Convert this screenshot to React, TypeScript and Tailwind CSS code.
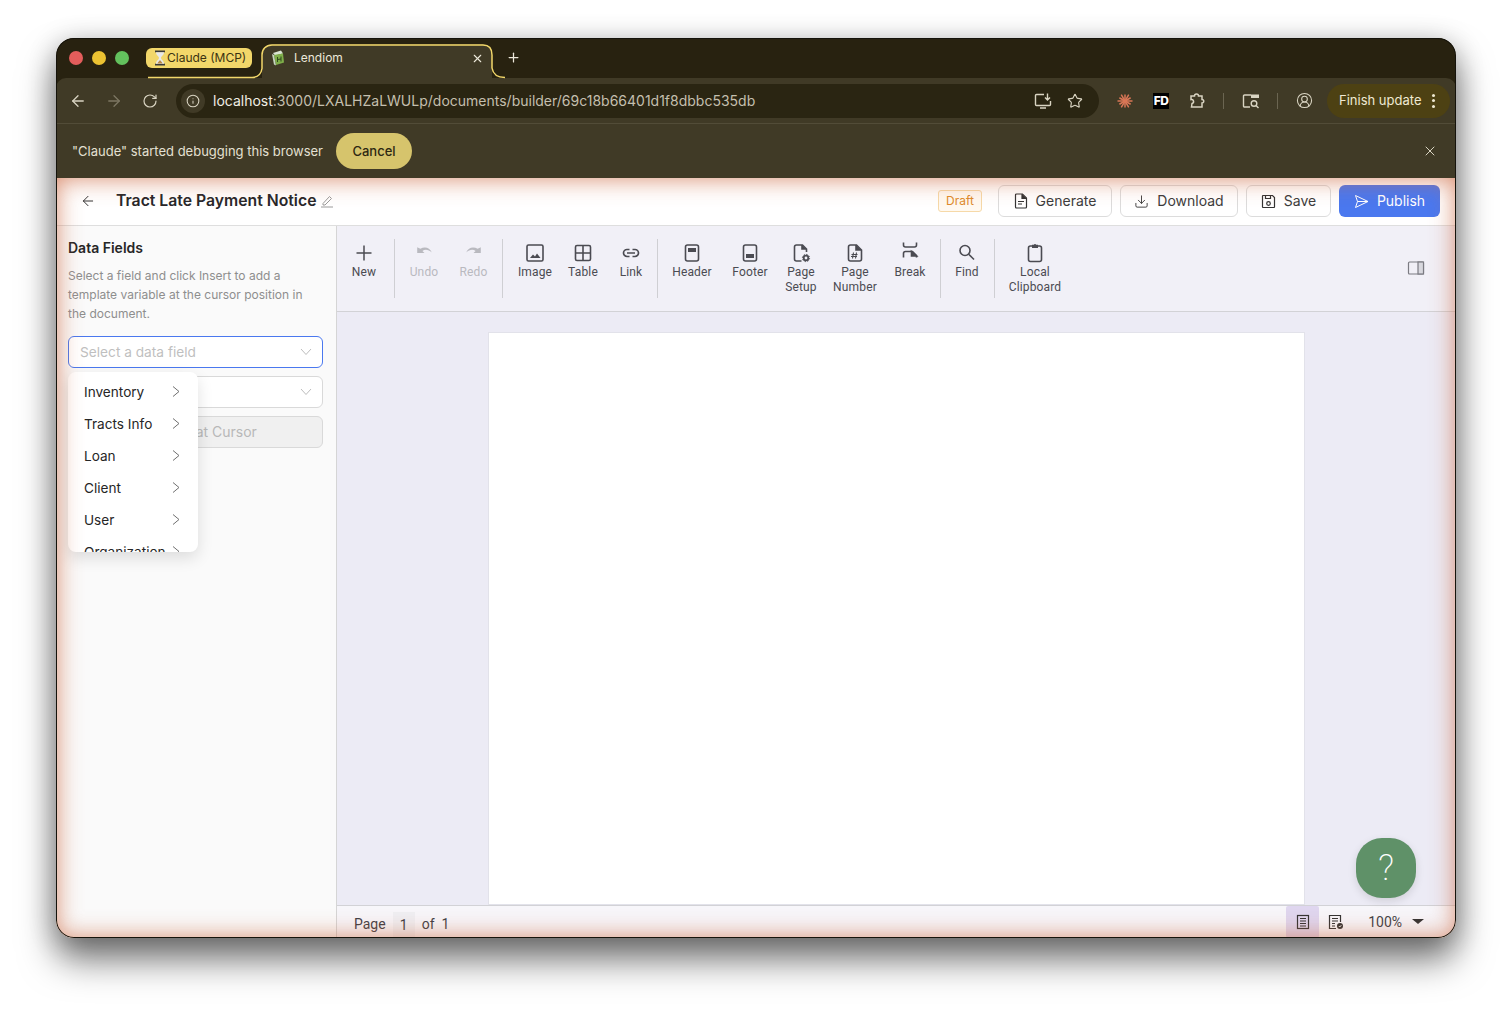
import {
  ArrowLeft,
  ArrowRight,
  CircleUserRound,
  Download,
  Info,
  Plus,
  RotateCw,
  Star,
  X,
} from 'lucide-react';
import type { ReactNode } from 'react';

const ico = { fill: 'none', stroke: 'currentColor', strokeWidth: 1.6 };

function Svg({ children, size = 22 }: { children: ReactNode; size?: number }) {
  return (
    <svg width={size} height={size} viewBox="0 0 24 24" {...ico}>
      {children}
    </svg>
  );
}

const toolIcons: Record<string, ReactNode> = {
  new: <Svg size={24}><path d="M12 4.500v15M4.500 12h15" strokeWidth="1.500" /></Svg>,
  undo: (
    <Svg size={25}>
      <path d="M8 8.500c4-2.500 9-1.500 11 3.500-3-3-6.500-3.500-9-1.500l2 2H5V7z" fill="currentColor" stroke="none" />
    </Svg>
  ),
  redo: (
    <Svg size={25}>
      <path d="M16 8.500c-4-2.500-9-1.500-11 3.500 3-3 6.500-3.500 9-1.500l-2 2h7V7z" fill="currentColor" stroke="none" />
    </Svg>
  ),
  image: (
    <Svg size={24}>
      <rect x="4" y="4" width="16" height="16" rx="1.500" />
      <path d="M7 17l3-3.500 2 2 2-3 3.500 4.500z" fill="currentColor" stroke="none" />
    </Svg>
  ),
  table: (
    <Svg size={24}>
      <rect x="4.500" y="4.500" width="15" height="15" rx="1.500" />
      <path d="M12 4.500v15M4.500 12h15" />
    </Svg>
  ),
  link: (
    <Svg size={24}>
      <path d="M10.500 8.500H8a3.500 3.500 0 0 0 0 7h2.500M13.500 8.500H16a3.500 3.500 0 0 1 0 7h-2.500M8 12h8" strokeWidth="1.700" />
    </Svg>
  ),
  header: (
    <Svg size={24}>
      <rect x="5.500" y="4" width="13" height="16" rx="2" />
      <rect x="8" y="7" width="8" height="4" fill="currentColor" stroke="none" />
    </Svg>
  ),
  footer: (
    <Svg size={24}>
      <rect x="5.500" y="4" width="13" height="16" rx="2" />
      <rect x="8" y="13" width="8" height="4" fill="currentColor" stroke="none" />
    </Svg>
  ),
  setup: (
    <Svg size={24}>
      <path d="M12.500 20H7.500a2 2 0 0 1-2-2V6a2 2 0 0 1 2-2h6l4 4v3" />
      <path d="M13 4v4h4" fill="currentColor" />
      <circle cx="17" cy="17" r="2.300" strokeWidth="1.800" />
      <circle cx="17" cy="17" r="3.600" strokeWidth="1" strokeDasharray="1.400 1.400" />
    </Svg>
  ),
  number: (
    <Svg size={24}>
      <path d="M7.500 4h6l5 5v9a2 2 0 0 1-2 2h-9a2 2 0 0 1-2-2V6a2 2 0 0 1 2-2z" />
      <path d="M13 4v5h5" fill="currentColor" />
      <path d="M10.500 11.500l-1 6M13.500 11.500l-1 6M8.500 13.500h6M8 15.500h6" strokeWidth="1.100" />
    </Svg>
  ),
  break: (
    <Svg size={24}>
      <path d="M5.500 1.500v2.500a2 2 0 0 0 2 2h9a2 2 0 0 0 2-2V1.500" />
      <path d="M5.500 16.500v-4a2 2 0 0 1 2-2h7l4 4v2" />
      <path d="M13.500 10.500v4.500h5z" fill="currentColor" />
    </Svg>
  ),
  find: (
    <Svg size={24}>
      <circle cx="10" cy="9.500" r="5" />
      <path d="M13.700 13.200L19 18.500" />
    </Svg>
  ),
  clipboard: (
    <Svg size={24}>
      <rect x="5.500" y="5" width="13" height="15.500" rx="2" />
      <path d="M9 3.800h1.800a1.300 1.300 0 0 1 2.400 0H15v3.200H9z" fill="currentColor" stroke="none" />
    </Svg>
  ),
};

const toolItems = [
  { icon: 'new', lines: ['New'], cls: 'w-[54px] ml-0', div: 'ml-[3px]' },
  { icon: 'undo', lines: ['Undo'], cls: 'w-[48px] ml-[5px]', off: true },
  { icon: 'redo', lines: ['Redo'], cls: 'w-[51px] ml-0', off: true, div: 'ml-[3px]' },
  { icon: 'image', lines: ['Image'], cls: 'w-[50px] ml-[7px]' },
  { icon: 'table', lines: ['Table'], cls: 'w-[46px] ml-0' },
  { icon: 'link', lines: ['Link'], cls: 'w-[46px] ml-[2px]', div: 'ml-[3px]' },
  { icon: 'header', lines: ['Header'], cls: 'w-[56px] ml-[6px]' },
  { icon: 'footer', lines: ['Footer'], cls: 'w-[56px] ml-[2px]' },
  { icon: 'setup', lines: ['Page', 'Setup'], cls: 'w-[46px] ml-0' },
  { icon: 'number', lines: ['Page', 'Number'], cls: 'w-[54px] ml-[4px]' },
  { icon: 'break', lines: ['Break'], cls: 'w-[48px] ml-[4px]', div: 'ml-[6px]' },
  { icon: 'find', lines: ['Find'], cls: 'w-[42px] ml-[5px]', div: 'ml-[6px]' },
  { icon: 'clipboard', lines: ['Local', 'Clipboard'], cls: 'w-[70px] ml-[5px]' },
];

const menuItems = ['Inventory', 'Tracts Info', 'Loan', 'Client', 'User', 'Organization'];

function Hourglass() {
  return (
    <svg width="12" height="16" viewBox="0 0 12 16">
      <rect x="1" y="0.500" width="10" height="1.800" fill="#3a3a3a" />
      <rect x="1" y="13.700" width="10" height="1.800" fill="#3a3a3a" />
      <path d="M2 2.300h8c0 3-3 4-3 5.700s3 2.700 3 5.700H2c0-3 3-4 3-5.700S2 5.300 2 2.300z" fill="#e8e8e8" />
      <path d="M3.500 13.500c.5-2 2-2.500 2.500-3.500.500 1 2 1.500 2.500 3.500z" fill="#b98a4a" />
    </svg>
  );
}

function Favicon() {
  return (
    <svg width="14" height="16" viewBox="0 0 14 16">
      <path d="M2 3l8-2.500 2 3-8 2z" fill="#d9e4d2" />
      <path d="M3 5l9-1.500 1 9-8 2.500z" fill="#7fae4a" />
      <path d="M1 4l2 1 2 10.500-2-1z" fill="#c7d6c0" />
      <path d="M6.500 7v5M10 6.500v5M6.500 9.500L10 9" stroke="#2f4a1c" strokeWidth="1" fill="none" />
    </svg>
  );
}

function ClaudeMark() {
  const rays = [0, 30, 60, 90, 120, 150, 180, 210, 240, 270, 300, 330];
  return (
    <svg width="16" height="16" viewBox="0 0 16 16">
      {rays.map((r, i) => (
        <line key={r} x1="8" y1="8" x2="8" y2={i % 2 ? 0.500 : 1.500} stroke="#d97757" strokeWidth="1.500" transform={`rotate(${r} 8 8)`} />
      ))}
    </svg>
  );
}

function SelectCaret() {
  return (
    <svg width="12" height="8" viewBox="0 0 12 8" fill="none" stroke="#bdbdbd" strokeWidth="1">
      <path d="M1 1l5 5.500L11 1" />
    </svg>
  );
}

function ActionButton({ icon, label, cls }: { icon: ReactNode; label: string; cls: string }) {
  return (
    <button className={`flex h-8 items-center justify-center gap-2 rounded-md border border-[#dcdcdc] bg-white text-sm text-[#3c3c3c] ${cls}`}>
      {icon}
      {label}
    </button>
  );
}

export default function App() {
  return (
    <div className="h-[1012px] w-[1512px] overflow-hidden bg-white pl-14 pt-[38px] font-['Inter',sans-serif]">
      <div className="relative flex h-[900px] w-[1400px] flex-col overflow-hidden rounded-[18px] bg-[#282210] shadow-[0_22px_36px_rgba(0,0,0,0.52),0_4px_28px_rgba(0,0,0,0.24)]">
        {/* Tab strip */}
        <div className="flex h-10 shrink-0 items-center pl-[13px]">
          <div className="flex items-center gap-[9px]">
            <span className="h-[14px] w-[14px] rounded-full bg-[#e35d5b]" />
            <span className="h-[14px] w-[14px] rounded-full bg-[#ecc232]" />
            <span className="h-[14px] w-[14px] rounded-full bg-[#63c15d]" />
          </div>
          <div className="ml-[17px] flex h-5 w-[106px] items-center rounded-md bg-[#f2d76a] pl-2 text-xs text-[#3b3212]">
            <Hourglass />
            <span className="ml-px">Claude (MCP)</span>
          </div>
          <div className="relative ml-[10px] mt-[6px] flex h-[34px] w-[230px] items-center rounded-t-[10px] bg-[#403a26] pb-[6px] pl-[9px] pr-2 text-xs text-[#ece8da]">
            <svg className="absolute left-[-116px] top-0" width="362" height="35" viewBox="0 0 362 35" fill="none" stroke="#f2d76a" strokeWidth="1.500">
              <path d="M2 33.500H106c5 0 9-3 10-9V11c0-6 4-10 10-10H337c6 0 9 4 9 10v13c1 6 5 9.500 13 9.500" />
            </svg>
            <Favicon />
            <span className="ml-[9px] flex-1">Lendiom</span>
            <X size={13} strokeWidth={2} />
            <Plus size={15} strokeWidth={2} className="absolute left-[244px] top-[6px]" />
          </div>
        </div>

        {/* Toolbar */}
        <div className="flex h-[46px] shrink-0 items-center rounded-t-[10px] border-b border-[#524c38] bg-[#403a26] text-[#d9d4c2]">
          <div className="flex w-[120px] items-center gap-[18px] pl-[13px]">
            <ArrowLeft size={18} strokeWidth={1.700} />
            <ArrowRight size={18} strokeWidth={1.700} className="text-[#7d7763]" />
            <RotateCw size={16} strokeWidth={1.800} className="ml-px" />
          </div>
          <div className="flex h-[34px] w-[923px] items-center rounded-full bg-[#2a2512] pl-[5px] pr-4">
            <span className="flex h-6 w-6 items-center justify-center rounded-full bg-[#403a26]">
              <Info size={14} strokeWidth={1.800} />
            </span>
            <span className="ml-2 flex-1 text-sm text-[#c4bfae]">
              <span className="text-[#f1eee4]">localhost</span>:3000/LXALHZaLWULp/documents/builder/69c18b66401d1f8dbbc535db
            </span>
            <svg width="18" height="18" viewBox="0 0 18 18" fill="none" stroke="currentColor" strokeWidth="1.400" className="mr-[15px]">
              <path d="M10 2.500H2.500a1 1 0 0 0-1 1v9a1 1 0 0 0 1 1h13a1 1 0 0 0 1-1V9M6 16h6" />
              <path d="M13.500 1.500v6.500M11 5.500l2.500 2.500L16 5.500" />
            </svg>
            <Star size={16} strokeWidth={1.700} />
          </div>
          <div className="ml-[18px] flex items-center">
            <ClaudeMark />
            <span className="ml-[20px] flex h-4 w-4 items-center justify-center bg-black text-xs font-extrabold leading-none tracking-[-0.5px] text-white">FD</span>
            <svg width="18" height="18" viewBox="0 0 18 18" fill="none" stroke="currentColor" strokeWidth="1.500" className="ml-[19px]">
              <path d="M3 4h3.500a2 2 0 0 1 4 0H14v3.500a1.500 1.500 0 0 1 0 3.500v4H3.500l.5-3.500a2 2 0 0 0-1-4z" />
            </svg>
            <span className="ml-[17px] h-4 w-px bg-[#6b6551]" />
            <svg width="18" height="18" viewBox="0 0 18 18" fill="none" stroke="currentColor" strokeWidth="1.400" className="ml-[18px]">
              <path d="M8 15H2.500a1 1 0 0 1-1-1V4a1 1 0 0 1 1-1H9" />
              <rect x="9" y="2.500" width="8" height="3.500" fill="currentColor" stroke="none" />
              <circle cx="12" cy="11.500" r="2.800" />
              <path d="M14 13.500l2.500 2.500" />
            </svg>
            <span className="ml-[17px] h-4 w-px bg-[#6b6551]" />
            <CircleUserRound size={17} strokeWidth={1.500} className="ml-[18px]" />
          </div>
          <div className="ml-[14px] flex h-[34px] w-[123px] items-center rounded-full bg-[#4d4113] pl-3 text-[13px] text-[#efe9d2]">
            <span className="pt-px">Finish update</span>
            <span className="ml-[11px] flex flex-col gap-[2.500px]">
              <span className="h-[3px] w-[3px] rounded-full bg-[#efe9d2]" />
              <span className="h-[3px] w-[3px] rounded-full bg-[#efe9d2]" />
              <span className="h-[3px] w-[3px] rounded-full bg-[#efe9d2]" />
            </span>
          </div>
        </div>

        {/* Debugging banner */}
        <div className="flex h-[54px] shrink-0 items-center bg-[#403a26] pl-4 pr-[18px] text-[13px] text-[#e4e0d2]">
          <span className="pt-px">"Claude" started debugging this browser</span>
          <button className="ml-[13px] h-9 w-[76px] rounded-full bg-[#d6c46c] pt-px text-[13px] font-medium text-[#2d2812]">Cancel</button>
          <X size={16} strokeWidth={1.500} className="ml-auto text-[#d9d4c2]" />
        </div>

        {/* App */}
        <div className="relative flex min-h-0 flex-1 flex-col bg-white">
          <div className="flex h-[47px] shrink-0 items-center pb-px pl-[24px] pr-4">
            <ArrowLeft size={16} strokeWidth={1.500} className="text-[#333]" />
            <span className="ml-5 text-[15.75px] font-semibold text-[#27272a]">Tract Late Payment Notice</span>
            <svg width="14" height="14" viewBox="0 0 14 14" fill="none" stroke="#9a9a9a" strokeWidth="1" className="ml-1">
              <path d="M3 9.500L9.500 2.500l2 2L5 11H3zM1 13h12" />
            </svg>
            <span className="ml-auto flex h-[22px] w-11 items-center justify-center rounded-[3px] border border-[#f6d9a8] bg-[#fff9f0] text-xs text-[#de8b2c]">Draft</span>
            <ActionButton
              icon={
                <svg width="14" height="16" viewBox="0 0 14 16" fill="none" stroke="#333" strokeWidth="1.200">
                  <path d="M2.500 1h6l4 4v9a1 1 0 0 1-1 1h-9a1 1 0 0 1-1-1V2a1 1 0 0 1 1-1z" />
                  <path d="M8 1v4.500h4.500" fill="#333" />
                  <path d="M4 8.500h6M4 11h4" />
                </svg>
              }
              label="Generate"
              cls="ml-4 w-[114px]"
            />
            <ActionButton icon={<Download size={15} strokeWidth={1.500} />} label="Download" cls="ml-2 w-[118px]" />
            <ActionButton
              icon={
                <svg width="15" height="15" viewBox="0 0 15 15" fill="none" stroke="#333" strokeWidth="1.200">
                  <path d="M2 1.500h9.500l2 2V13a.5.500 0 0 1-.5.500H2a.5.500 0 0 1-.5-.5V2a.5.500 0 0 1 .5-.5z" />
                  <path d="M4.500 1.500v3h5v-3" />
                  <circle cx="7.500" cy="9.500" r="1.800" />
                </svg>
              }
              label="Save"
              cls="ml-2 w-[85px]"
            />
            <button className="ml-2 flex h-8 w-[101px] items-center justify-center gap-2 rounded-md bg-[#4a78ef] text-sm text-white">
              <svg width="15" height="15" viewBox="0 0 15 15" fill="none" stroke="#fff" strokeWidth="1">
                <path d="M1.500 1.500l12.500 6-12.500 6 2-6zM3.500 7.500H14" />
              </svg>
              Publish
            </button>
          </div>

          <div className="flex min-h-0 flex-1 border-t border-[#dedede]">
            {/* Sidebar */}
            <div className="relative w-[281px] shrink-0 border-r border-[#d5d5d5] bg-[#fafafa] px-3 pt-[13px]">
              <h2 className="text-sm font-semibold leading-[18px] text-[#262626]">Data Fields</h2>
              <p className="mt-[9px] w-[250px] text-xs leading-[19px] text-[#8e8e8e]">
                Select a field and click Insert to add a template variable at the cursor position in the document.
              </p>
              <div className="mt-[13px] flex h-8 w-[255px] items-center justify-between rounded-md border border-[#4a78ef] bg-white pl-[11px] pr-[10px] text-[13.7px] text-[#bfbfbf]">
                Select a data field
                <SelectCaret />
              </div>
              <div className="mt-2 flex h-8 w-[255px] items-center justify-end rounded-md border border-[#d9d9d9] bg-white pr-[10px]">
                <SelectCaret />
              </div>
              <div className="mt-2 flex h-8 w-[255px] items-center justify-center rounded-md border border-[#d9d9d9] bg-[#f0f0f0] pl-5 text-sm text-[#b8b8b8]">
                Insert at Cursor
              </div>

              {/* Open cascader menu */}
              <div className="absolute left-3 top-[146px] h-[180px] w-[130px] overflow-hidden rounded-lg bg-white pt-1 shadow-[0_6px_16px_rgba(0,0,0,0.12)]">
                {menuItems.map((item) => (
                  <div key={item} className="flex h-8 items-center justify-between pl-4 pr-[18px] text-[13.6px] whitespace-nowrap text-[#262626]">
                    {item}
                    <svg width="8" height="11" viewBox="0 0 8 11" fill="none" stroke="#6f6f6f" strokeWidth="1" className="shrink-0 -translate-y-px">
                      <path d="M1 0.500l6 5-6 5" />
                    </svg>
                  </div>
                ))}
              </div>
            </div>

            {/* Editor */}
            <div className="relative flex min-w-0 flex-1 flex-col font-['Roboto',sans-serif]">
              <div className="flex h-[86px] shrink-0 items-start border-b border-[#d2d2d6] bg-[#f1f0f7] pt-[14px]">
                {toolItems.map((t) => (
                  <div key={t.icon} className="contents">
                    <div className={`flex shrink-0 flex-col items-center text-xs leading-[15px] tracking-[0.15px] ${t.cls} ${t.off ? 'text-[#b9b9bf]' : 'text-[#4b4b52]'}`}>
                      <span className="flex h-[25px] items-center">{toolIcons[t.icon]}</span>
                      {t.lines.map((l) => (
                        <span key={l}>{l}</span>
                      ))}
                    </div>
                    {t.div && <span className={`-mt-px h-[59px] w-px shrink-0 bg-[#cfcfd3] ${t.div}`} />}
                  </div>
                ))}
                <svg width="18" height="18" viewBox="0 0 18 18" fill="none" stroke="#7b7b82" strokeWidth="1.200" className="ml-auto mr-[31px] mt-[19px]">
                  <rect x="1.500" y="3" width="15" height="12" rx="1" />
                  <rect x="11" y="3" width="5.500" height="12" fill="#d8d8de" />
                </svg>
              </div>

              <div className="min-h-0 flex-1 overflow-hidden bg-[#ecebf5] pt-5">
                <div className="ml-[151px] h-full w-[817px] border border-[#e2e2ea] bg-white" />
              </div>

              <div className="flex h-[33px] shrink-0 items-end border-t border-[#d2d2d6] bg-[#f7f6fa] pl-[17px] text-sm text-[#3f3f46]">
                <span className="mb-1">Page</span>
                <span className="ml-[7px] flex h-[26px] w-[22px] items-center justify-center bg-[#efeff3] pb-px">1</span>
                <span className="mb-1 ml-[7px]">of</span>
                <span className="mb-1 ml-[7px]">1</span>
                <div className="ml-auto flex h-full items-start pr-8">
                  <span className="flex h-8 w-[33px] items-center justify-center rounded-[2px] bg-[#dfd6ef]">
                    <svg width="16" height="16" viewBox="0 0 16 16" fill="none" stroke="#333" strokeWidth="1.200">
                      <rect x="2.500" y="1.500" width="11" height="13" />
                      <path d="M5 4.500h6M5 7h6M5 9.500h6M5 12h6" />
                    </svg>
                  </span>
                  <span className="flex h-8 w-[33px] items-center justify-center">
                    <svg width="16" height="16" viewBox="0 0 16 16" fill="none" stroke="#333" strokeWidth="1.200">
                      <path d="M8 14.500H1.500v-13h11V8" />
                      <path d="M4 4.500h6M4 7h6M4 9.500h3M4 12h3" />
                      <circle cx="12" cy="12" r="3" fill="#333" stroke="none" />
                      <path d="M10.800 12l1 1 1.500-1.800" stroke="#fff" strokeWidth="0.900" />
                    </svg>
                  </span>
                  <span className="ml-4 mt-[6px] text-sm">100%</span>
                  <span className="ml-[10px] mt-[13px] h-0 w-0 border-x-[6px] border-t-[5px] border-x-transparent border-t-[#333]" />
                </div>
              </div>

              {/* Help button */}
              <button className="absolute bottom-10 right-10 flex h-[60px] w-[60px] items-center justify-center rounded-[26px] bg-[#5f9168] text-[36px] font-extralight text-white shadow-[0_3px_8px_rgba(0,0,0,0.12)]">
                ?
              </button>
            </div>
          </div>

          {/* Debugging glow */}
          <div className="pointer-events-none absolute inset-0 shadow-[inset_0_0_24px_rgba(205,105,65,0.8)]" />
        </div>

        {/* Window edge */}
        <div className="pointer-events-none absolute inset-0 rounded-[18px] shadow-[inset_0_0_0_1px_#15130b]" />
      </div>
    </div>
  );
}
